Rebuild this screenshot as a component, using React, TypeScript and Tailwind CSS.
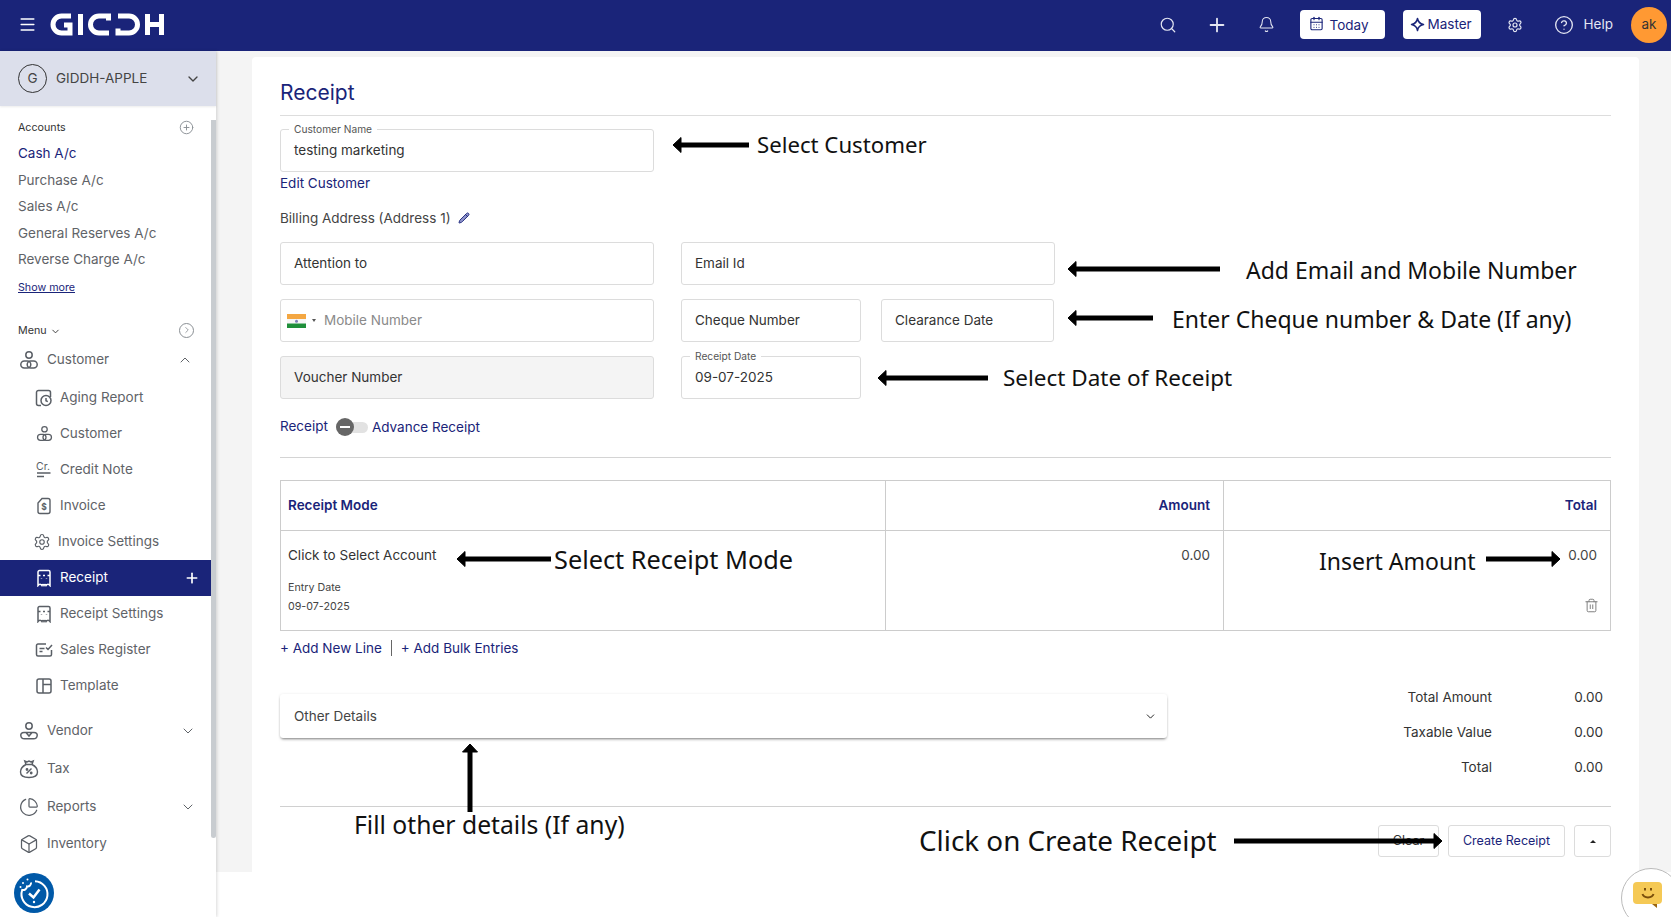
import type { ReactNode } from 'react';
import {
  Bell,
  Box,
  CalendarDays,
  ChevronDown,
  ChevronRight,
  ChevronUp,
  CirclePlus,
  CircleHelp,
  Menu,
  Pencil,
  PieChart,
  Plus,
  Search,
  Settings,
  Trash2,
} from 'lucide-react';

const ink = '#5a5f66';

function Logo() {
  return (
    <svg width="114" height="23" viewBox="0 0 114 23" fill="none" stroke="#fff" strokeWidth="5">
      <path d="M21 3H11.5a8.5 8.5 0 0 0 0 17H20V12h-6" />
      <path d="M30.5 1v21" />
      <path d="M58.500 7.500V3H49a8.500 8.500 0 0 0 0 17h10" />
      <path d="M68 15.500V20h11a8.500 8.500 0 0 0 0-17H68" />
      <path d="M97.500 1v21M111.500 1v21M97.500 11.500h14" />
    </svg>
  );
}

function PersonIcon({ size = 20, vendor = false, color = ink }: { size?: number; vendor?: boolean; color?: string }) {
  return (
    <svg width={size} height={size} viewBox="0 0 20 20" fill="none" stroke={color} strokeWidth="1.5">
      <circle cx="10" cy="5" r="3.2" />
      {vendor ? (
        <path d="M5 11.5h10c2.6 0 3.4 1.6 3.2 3-.2 2-1.8 3.3-3.7 3.3h-9C3.600 17.800 2 16.500 1.800 14.500c-.2-1.400.6-3 3.200-3zM7 11.500l3 3.500 3-3.500" />
      ) : (
        <>
          <rect x="1.800" y="11" width="10" height="7" rx="3.500" />
          <rect x="8.200" y="11" width="10" height="7" rx="3.500" />
        </>
      )}
    </svg>
  );
}

function AgingIcon() {
  return (
    <svg width="18" height="18" viewBox="0 0 18 18" fill="none" stroke={ink} strokeWidth="1.5">
      <path d="M6 16.500H3.500a2 2 0 0 1-2-2v-11a2 2 0 0 1 2-2h10a2 2 0 0 1 2 2V8" />
      <circle cx="11" cy="11.500" r="5" />
      <path d="M11 9v2.700l1.800 1" />
    </svg>
  );
}

function CreditIcon() {
  return (
    <svg width="18" height="18" viewBox="0 0 18 18" fill="none" stroke={ink} strokeWidth="1.300">
      <text x="1" y="9" fontSize="10.500" fontFamily="Inter, sans-serif" fill={ink} stroke="none">
        Cr.
      </text>
      <path d="M2 12h13.500M2 15.500h7" />
    </svg>
  );
}

function InvoiceIcon() {
  return (
    <svg width="18" height="18" viewBox="0 0 18 18" fill="none" stroke={ink} strokeWidth="1.400">
      <path d="M7 1.500h6a2 2 0 0 1 2 2v11a2 2 0 0 1-2 2H5a2 2 0 0 1-2-2V6z" />
      <text x="6.200" y="13" fontSize="8.500" fontWeight="700" fontFamily="Inter, sans-serif" fill={ink} stroke="none">
        $
      </text>
    </svg>
  );
}

function ReceiptIcon({ color = ink }: { color?: string }) {
  return (
    <svg width="18" height="18" viewBox="0 0 18 18" fill="none" stroke={color} strokeWidth="1.500">
      <path d="M3 16.500V3a1.500 1.500 0 0 1 1.500-1.500h9A1.500 1.500 0 0 1 15 3v13.500c-1.200-1.800-2.800-1.800-4 0-.7-1.200-1.300-1.200-2 0-.7-1.200-1.300-1.200-2 0-1.200-1.800-2.800-1.800-4 0z" />
      <path d="M3 6.500h2.500M8 6.500h2M12.500 6.500H15M6.500 9.500v.6M11.500 9.500v.6" />
    </svg>
  );
}

function SalesIcon() {
  return (
    <svg width="18" height="18" viewBox="0 0 18 18" fill="none" stroke={ink} strokeWidth="1.500">
      <path d="M11 3H3a1.500 1.500 0 0 0-1.500 1.500v9A1.500 1.500 0 0 0 3 15h12a1.500 1.500 0 0 0 1.500-1.500V9" />
      <path d="M4.500 7.500h5M4.500 10.500h3M11 6.500l2 2 4-4.500" />
    </svg>
  );
}

function TemplateIcon() {
  return (
    <svg width="18" height="18" viewBox="0 0 18 18" fill="none" stroke={ink} strokeWidth="1.500">
      <rect x="2" y="2" width="14" height="14" rx="2" />
      <path d="M8 2v14M8 7.500h8" />
    </svg>
  );
}

function TaxIcon() {
  return (
    <svg width="20" height="20" viewBox="0 0 20 20" fill="none" stroke={ink} strokeWidth="1.400">
      <path d="M7 5.500 5.800 2l2.200 1 2-1 2 1 2.200-1L13 5.500" />
      <path d="M7 5.500h6c3 1.500 5.500 4.500 5.500 7.500 0 3.500-3 5.500-8.500 5.500S1.500 16.500 1.500 13c0-3 2.500-6 5.500-7.500z" />
      <path d="m7.500 14.500 5-5" />
      <circle cx="8" cy="10.500" r=".7" />
      <circle cx="12.200" cy="14" r=".7" />
    </svg>
  );
}

function MasterStar() {
  return (
    <svg width="15" height="15" viewBox="0 0 15 15" fill="none" stroke="#1a2479" strokeWidth="1.500">
      <path d="M7.500 1.500c.6 3.500 2.300 5.300 6 6-3.700.7-5.400 2.500-6 6-.6-3.500-2.300-5.300-6-6 3.700-.7 5.400-2.500 6-6z" strokeLinejoin="round" />
    </svg>
  );
}

function IndiaFlag() {
  return (
    <svg width="19" height="14" viewBox="0 0 19 14">
      <rect width="19" height="5" fill="#f4a742" />
      <rect y="5" width="19" height="4.500" fill="#f6f6f6" />
      <rect y="9.500" width="19" height="4.500" fill="#1f8f3a" />
      <circle cx="9.500" cy="7.200" r="1.500" fill="#7c7fb5" />
    </svg>
  );
}

function CookieBadge() {
  return (
    <svg width="40" height="40" viewBox="0 0 40 40" fill="none" stroke="#fff" strokeWidth="2">
      <circle cx="20" cy="20" r="20" fill="#0059a8" stroke="none" />
      <path d="M17 9.500a3.500 3.500 0 0 1-4 4 4 4 0 0 1-4.800 3.500A13 13 0 1 0 21 8.200" />
      <path d="m15 20.500 4.500 4 6-8" strokeWidth="2.500" />
      <circle cx="9" cy="10" r="1" fill="#fff" stroke="none" />
      <circle cx="13.500" cy="6.500" r="1" fill="#fff" stroke="none" />
      <circle cx="6.500" cy="14" r="1" fill="#fff" stroke="none" />
      <circle cx="20" cy="29" r="1.200" fill="#fff" stroke="none" />
    </svg>
  );
}

function AccountLink({ children, active = false }: { children: ReactNode; active?: boolean }) {
  return (
    <div className={`flex h-[26.500px] items-center text-[13.500px] ${active ? 'text-[#1a2479]' : 'text-[#5f6368]'}`}>
      {children}
    </div>
  );
}

function SubItem({
  icon,
  label,
  active = false,
  tight = false,
}: {
  icon: ReactNode;
  label: string;
  active?: boolean;
  tight?: boolean;
}) {
  return (
    <div
      className={`flex h-9 items-center text-[13.500px] ${active ? 'bg-[#1a2479] text-white' : 'text-[#5f6368]'} ${
        tight ? 'pl-[33px]' : 'pl-[35px]'
      }`}
    >
      <span className="mr-[7px] flex w-[18px] justify-center">{icon}</span>
      <span className="flex-1">{label}</span>
      {active && <Plus className="mr-[11px] h-4 w-4 text-white" strokeWidth={2.500} />}
    </div>
  );
}

function MainItem({ icon, label, chevron, className = '' }: { icon: ReactNode; label: string; chevron?: boolean; className?: string }) {
  return (
    <div className={`flex h-9 items-center pl-[18px] pr-[15px] text-[13.500px] text-[#5f6368] ${className}`}>
      <span className="mr-[7px] flex w-[22px] justify-center">{icon}</span>
      <span className="flex-1">{label}</span>
      {chevron && <ChevronDown className="h-4 w-4 text-[#5f6368]" strokeWidth={1.500} />}
    </div>
  );
}

function Sidebar() {
  return (
    <aside className="relative z-10 h-[866px] w-[216px] shrink-0 bg-white shadow-[1px_0_3px_rgba(0,0,0,0.15)]">
      <div className="flex h-[55px] items-center bg-[#dcdfeb] pl-[18px] pr-[15px] shadow-[0_1px_2px_rgba(0,0,0,0.08)]">
        <div className="flex h-[29px] w-[29px] items-center justify-center rounded-full border border-[#333] text-[13.500px] text-[#444]">G</div>
        <span className="ml-[9px] flex-1 text-[13.500px] text-[#444]">GIDDH-APPLE</span>
        <ChevronDown className="h-4 w-4 text-[#444]" />
      </div>

      <div className="w-[211px] pt-[14px]">
        <div className="flex h-[16px] items-center pl-[18px] pr-[17px]">
          <span className="flex-1 text-[10.700px] text-[#333]">Accounts</span>
          <CirclePlus className="h-[15px] w-[15px] -translate-y-px text-[#8a8f94]" strokeWidth={1.500} />
        </div>
        <div className="mt-[4px] pl-[18px]">
          <AccountLink active>Cash A/c</AccountLink>
          <AccountLink>Purchase A/c</AccountLink>
          <AccountLink>Sales A/c</AccountLink>
          <AccountLink>General Reserves A/c</AccountLink>
          <AccountLink>Reverse Charge A/c</AccountLink>
        </div>
        <div className="mt-[7px] pl-[18px] text-[10.700px] leading-4 text-[#1a2479] underline">Show more</div>

        <div className="mt-[27.500px] flex h-[16px] items-center pl-[18px] pr-[17px]">
          <span className="text-[10.700px] text-[#333]">Menu</span>
          <ChevronDown className="ml-[3px] h-[11px] w-[11px] text-[#333]" />
          <span className="flex-1" />
          <span className="flex h-[15px] w-[15px] -translate-y-px items-center justify-center rounded-full border border-[#8a8f94]">
            <ChevronRight className="h-[10px] w-[10px] text-[#8a8f94]" />
          </span>
        </div>

        <div className="mt-[2.500px] flex h-9 items-center pl-[18px] pr-[18px] text-[13.500px] text-[#5f6368]">
          <span className="mr-[7px] flex w-[22px] justify-center">
            <PersonIcon />
          </span>
          <span className="flex-1">Customer</span>
          <ChevronUp className="h-4 w-4" strokeWidth={1.500} />
        </div>
        <div className="mt-[2px]">
          <SubItem icon={<AgingIcon />} label="Aging Report" />
          <SubItem icon={<PersonIcon size={17} />} label="Customer" />
          <SubItem icon={<CreditIcon />} label="Credit Note" />
          <SubItem icon={<InvoiceIcon />} label="Invoice" />
          <SubItem tight icon={<Settings className="h-[18px] w-[18px]" strokeWidth={1.500} color={ink} />} label="Invoice Settings" />
          <SubItem active icon={<ReceiptIcon color="#fff" />} label="Receipt" />
          <SubItem icon={<ReceiptIcon />} label="Receipt Settings" />
          <SubItem icon={<SalesIcon />} label="Sales Register" />
          <SubItem icon={<TemplateIcon />} label="Template" />
        </div>

        <MainItem className="mt-[9px]" icon={<PersonIcon vendor />} label="Vendor" chevron />
        <MainItem className="mt-[2px]" icon={<TaxIcon />} label="Tax" />
        <MainItem className="mt-[2px]" icon={<PieChart className="h-5 w-5" strokeWidth={1.500} color={ink} />} label="Reports" chevron />
        <MainItem className="mt-[1px]" icon={<Box className="h-5 w-5" strokeWidth={1.500} color={ink} />} label="Inventory" />
      </div>

      {/* scrollbar thumb */}
      <div className="absolute left-[211px] top-[69px] h-[718px] w-[5px] rounded-b-sm bg-[#c8ccd0]" />
      <div className="absolute left-[14px] top-[822px]">
        <CookieBadge />
      </div>
    </aside>
  );
}

function TopBar() {
  return (
    <header className="flex h-[51px] items-center bg-[#1a2479] pb-[2px] text-white">
      <Menu className="ml-[18px] h-[19px] w-[19px]" strokeWidth={1.800} />
      <div className="ml-[13px]">
        <Logo />
      </div>
      <span className="flex-1" />
      <Search className="h-[18px] w-[18px] text-[#e4e6f2]" strokeWidth={1.600} />
      <Plus className="ml-[29px] h-[22px] w-[22px] text-[#e4e6f2]" strokeWidth={2} />
      <Bell className="ml-[30px] h-[17px] w-[17px] text-[#e4e6f2]" strokeWidth={1.500} />
      <div className="ml-[25px] flex h-[29px] w-[85px] items-center rounded-[4px] bg-white pl-[9px] text-[13.500px] text-[#1a2479]">
        <CalendarDays className="mr-[6px] h-[15px] w-[15px] -translate-y-px" strokeWidth={1.800} />
        <span className="translate-y-px">Today</span>
      </div>
      <div className="ml-[18px] flex h-[29px] w-[78px] items-center rounded-[4px] bg-white pl-[7px] text-[13.500px] text-[#1a2479]">
        <span className="mr-[3px]">
          <MasterStar />
        </span>
        Master
      </div>
      <Settings className="ml-[26px] h-[16px] w-[16px] text-[#e4e6f2]" strokeWidth={1.800} />
      <CircleHelp className="ml-[31px] h-[20px] w-[20px] text-[#e4e6f2]" strokeWidth={1.600} />
      <span className="ml-[10px] text-[13.500px] text-[#e4e6f2]">Help</span>
      <div className="ml-[18px] mr-[4px] flex h-9 w-9 items-center justify-center rounded-full bg-[#ff9933] text-[13.500px] text-[#333]">ak</div>
    </header>
  );
}

function Field({
  label,
  value,
  placeholder,
  className = '',
}: {
  label?: string;
  value?: string;
  placeholder?: string;
  className?: string;
}) {
  return (
    <div className={`relative flex h-[43px] items-center rounded-[3px] border border-[#dcdcdc] px-[13px] text-[13.500px] text-[#333] ${className}`}>
      {label && <span className="absolute -top-[8px] left-[8px] bg-white px-[5px] text-[10.200px] leading-[14px] text-[#555]">{label}</span>}
      {value ?? placeholder}
    </div>
  );
}

function TotalRow({ label, value }: { label: string; value: string }) {
  return (
    <div className="flex h-[35px] items-center justify-end text-[13.500px] text-[#333]">
      <span>{label}</span>
      <span className="mr-[8px] w-[111px] text-right">{value}</span>
    </div>
  );
}

function ReceiptForm() {
  return (
    <main className="flex h-[821px] flex-1 bg-[#f4f4f4] pl-[36px] pr-[32px] pt-[6px]">
      <section className="h-[815px] w-[1387px] rounded-t-[4px] bg-white px-[28px]">
        <div className="flex h-[59px] items-end border-b border-[#dddddd] pb-[8px]">
          <h1 className="text-[21px] leading-7 text-[#1a2479]">Receipt</h1>
        </div>

        <Field label="Customer Name" value="testing marketing" className="mt-[13px] w-[374px]" />
        <div className="mt-[1px] flex h-5 items-center text-[13.500px] text-[#1a2479]">Edit Customer</div>
        <div className="mt-[15px] flex h-5 items-center text-[13.500px] text-[#444]">
          Billing Address (Address 1)
          <Pencil className="ml-[7px] h-[12px] w-[12px] text-[#1a2479]" fill="#8d92c9" strokeWidth={1.800} />
        </div>

        <div className="mt-[14px] flex gap-[27px]">
          <Field placeholder="Attention to" className="w-[374px]" />
          <Field placeholder="Email Id" className="w-[374px]" />
        </div>
        <div className="mt-[14px] flex gap-[27px]">
          <div className="flex h-[43px] w-[374px] items-center rounded-[3px] border border-[#dcdcdc] pl-[6px] text-[13.500px] text-[#8a8a8a]">
            <IndiaFlag />
            <span className="ml-[6px] mr-[8px] h-0 w-0 border-x-[2.500px] border-t-[3px] border-x-transparent border-t-[#555]" />
            Mobile Number
          </div>
          <div className="flex gap-[20px]">
            <Field placeholder="Cheque Number" className="w-[180px]" />
            <Field placeholder="Clearance Date" className="w-[173px]" />
          </div>
        </div>
        <div className="mt-[14px] flex gap-[27px]">
          <Field placeholder="Voucher Number" className="w-[374px] border-[#d6d6d6] bg-[#f4f4f4]" />
          <Field label="Receipt Date" value="09-07-2025" className="w-[180px]" />
        </div>

        <div className="mt-[18px] flex h-5 items-center text-[13.500px] text-[#1a2479]">
          <span className="-translate-y-px">Receipt</span>
          <span className="relative ml-[8px] mr-[4px] block h-[11px] w-[32px] rounded-full bg-[#e2e2e2]">
            <span className="absolute -top-[3.500px] left-0 flex h-[18px] w-[18px] items-center justify-center rounded-full bg-[#666]">
              <span className="h-[2px] w-[10px] bg-white" />
            </span>
          </span>
          Advance Receipt
        </div>

        <div className="mt-[20px] h-px bg-[#d4d4d4]" />

        <div className="mt-[22px] grid h-[151px] grid-cols-[605px_338px_1fr] grid-rows-[50px_1fr] border border-[#cccccc] text-[13.500px]">
          <div className="flex items-center border-b border-r border-[#cccccc] pb-[1px] pl-[7px] font-semibold text-[#1a2479]">Receipt Mode</div>
          <div className="flex items-center justify-end border-b border-r border-[#cccccc] pb-[1px] pr-[13px] font-semibold text-[#1a2479]">Amount</div>
          <div className="flex items-center justify-end border-b border-[#cccccc] pb-[1px] pr-[13px] font-semibold text-[#1a2479]">Total</div>
          <div className="border-r border-[#cccccc] pl-[7px] pt-[14px] text-[#333]">
            <div className="leading-[20px]">Click to Select Account</div>
            <div className="mt-[15px] text-[10.700px] leading-[16px] text-[#444]">Entry Date</div>
            <div className="mt-[3px] text-[10.700px] leading-[16px] text-[#444]">09-07-2025</div>
          </div>
          <div className="border-r border-[#cccccc] pr-[13px] pt-[14px] text-right leading-[20px] text-[#444]">0.00</div>
          <div className="flex flex-col items-end pr-[13px] pt-[14px] leading-[20px] text-[#444]">
            0.00
            <Trash2 className="mr-[-2px] mt-[33px] h-[15px] w-[15px] text-[#777]" strokeWidth={1.500} />
          </div>
        </div>

        <div className="mt-[5px] flex h-6 items-center text-[13.500px] text-[#1a2479]">
          + Add New Line
          <span className="mx-[9px] h-[16px] w-px bg-[#666]" />+ Add Bulk Entries
        </div>

        <div className="mt-[19px] flex h-[105px]">
          <div className="mt-[15px] flex h-[44px] w-[887px] items-center justify-between rounded-[3px] bg-white pl-[14px] pr-[10px] text-[13.500px] text-[#444] shadow-[0_2px_3px_-1px_rgba(0,0,0,0.5),0_0_3px_rgba(0,0,0,0.08)]">
            Other Details
            <ChevronDown className="h-[13px] w-[13px] text-[#222]" strokeWidth={1.800} />
          </div>
          <div className="flex-1 pt-[1px]">
            <TotalRow label="Total Amount" value="0.00" />
            <TotalRow label="Taxable Value" value="0.00" />
            <TotalRow label="Total" value="0.00" />
          </div>
        </div>

        <div className="mt-[22px] h-px bg-[#d0d0d0]" />

        <div className="mt-[18px] flex h-[32px] justify-end text-[12.500px]">
          <div className="flex w-[61px] items-center justify-center rounded-[3px] border border-[#dcdcdc] text-[#333]">Clear</div>
          <div className="ml-[9px] flex w-[117px] items-center justify-center rounded-[3px] border border-[#dcdcdc] text-[#1a2479]">Create Receipt</div>
          <div className="ml-[9px] flex w-[37px] items-center justify-center rounded-[3px] border border-[#dcdcdc]">
            <span className="h-0 w-0 border-x-[3px] border-b-[3px] border-x-transparent border-b-[#222]" />
          </div>
        </div>
      </section>
    </main>
  );
}

function HArrow({ className, width, right = false }: { className: string; width: number; right?: boolean }) {
  return (
    <svg className={`absolute ${className}`} width={width} height="16" viewBox={`0 0 ${width} 16`}>
      {right ? (
        <path d={`M0 6h${width - 8}V0.500l8 7.500-8 7.500V10H0z`} fill="#000" stroke="#000" strokeLinejoin="round" />
      ) : (
        <path d={`M${width} 6H8V.500L0 8l8 7.500V10h${width - 8}z`} fill="#000" stroke="#000" strokeLinejoin="round" />
      )}
    </svg>
  );
}

function Note({ className, children }: { className: string; children: ReactNode }) {
  return (
    <span className={`absolute -translate-y-1/2 whitespace-nowrap leading-none text-[#111] [font-family:'Noto_Sans',sans-serif] ${className}`}>
      {children}
    </span>
  );
}

export default function App() {
  return (
    <div className="relative h-[917px] w-[1671px] overflow-hidden bg-white [font-family:Inter,sans-serif]">
      <TopBar />
      <div className="flex">
        <Sidebar />
        <ReceiptForm />
      </div>

      <HArrow className="left-[673px] top-[137px]" width={76} />
      <Note className="left-[757px] top-[145px] text-[22.200px]">Select Customer</Note>
      <HArrow className="left-[1068px] top-[261px]" width={152} />
      <Note className="left-[1246px] top-[270px] text-[23px]">Add Email and Mobile Number</Note>
      <HArrow className="left-[1068px] top-[310px]" width={85} />
      <Note className="left-[1172px] top-[319px] text-[23px]">Enter Cheque number &amp; Date (If any)</Note>
      <HArrow className="left-[878px] top-[370px]" width={110} />
      <Note className="left-[1003px] top-[378px] text-[22.500px]">Select Date of Receipt</Note>
      <HArrow className="left-[457px] top-[551px]" width={94} />
      <Note className="left-[554px] top-[560px] text-[25.300px]">Select Receipt Mode</Note>
      <Note className="left-[1319px] top-[561px] text-[23px]">Insert Amount</Note>
      <HArrow right className="left-[1486px] top-[551px]" width={74} />
      <svg className="absolute left-[462px] top-[744px]" width="16" height="68" viewBox="0 0 16 68">
        <path d="M6 68V8H.500L8 0l7.500 8H10v60z" fill="#000" stroke="#000" strokeLinejoin="round" />
      </svg>
      <Note className="left-[354px] top-[825px] text-[24.700px]">Fill other details (If any)</Note>
      <Note className="left-[919px] top-[841px] text-[27.800px]">Click on Create Receipt</Note>
      <HArrow right className="left-[1234px] top-[833px]" width={208} />

      {/* feedback widget */}
      <div className="absolute left-[1621px] top-[868px] flex h-[60px] w-[60px] items-start justify-start rounded-full border border-[#bbbbbb] bg-white pl-[11px] pt-[13px]">
        <div className="relative flex h-[22px] w-[29px] flex-col items-center justify-center rounded-[4px] bg-[#f5c955]">
          <svg width="18" height="15" viewBox="0 0 18 15" fill="none" stroke="#7a4e0c" strokeWidth="2">
            <path d="M6 2v2.500M12 2v2.500M3.500 8c1.500 4.500 9.500 4.500 11 0" />
          </svg>
          <span className="absolute -bottom-[4px] right-[5px] h-0 w-0 border-l-[5px] border-t-[4px] border-l-transparent border-t-[#9a6510]" />
        </div>
      </div>
    </div>
  );
}
